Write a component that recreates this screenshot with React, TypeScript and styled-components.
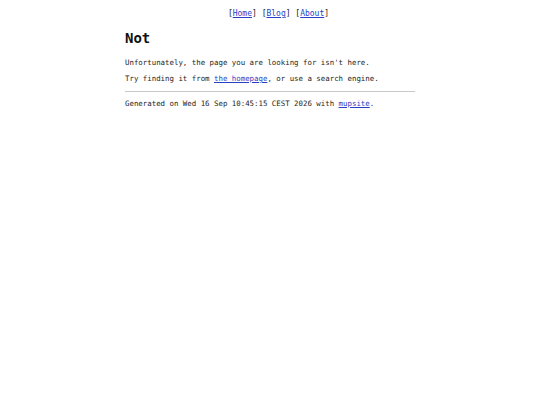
import React from "react";
import styled, { createGlobalStyle } from "styled-components";

const Global = createGlobalStyle`
  html, body { margin: 0; padding: 0; background: #fff; }
  body { font-family: "DejaVu Sans Mono", "Liberation Mono", monospace; color: #1c1c1c; }
`;

const Nav = styled.nav`
  margin-top: 9px;
  height: 10px;
  line-height: 10px;
  font-size: 8px;
  text-align: center;
  padding-left: 17px;
  color: #222;
`;

const Main = styled.main`
  width: 290px;
  margin: 0 auto;
`;

const Title = styled.h1`
  margin: 11px 0 0;
  font-size: 14px;
  line-height: 16px;
  font-weight: bold;
  color: #111;
`;

const Para = styled.p<{ $gap: number }>`
  margin: ${(p) => p.$gap}px 0 0;
  font-size: 7.4px;
  line-height: 10px;
  color: #1e1e1e;
`;

const Rule = styled.hr`
  margin: 7px 0 0;
  border: 0;
  border-top: 1px solid #c8c8c8;
  height: 0;
`;

const Link = styled.a`
  color: #2b3fc4;
  text-decoration: underline;
`;

export default function App() {
  return (
    <>
      <Global />
      <Nav>
        [<Link href="#">Home</Link>] [<Link href="#">Blog</Link>] [<Link href="#">About</Link>]
      </Nav>
      <Main>
        <Title>Not</Title>
        <Para $gap={12}>Unfortunately, the page you are looking for isn't here.</Para>
        <Para $gap={6}>
          Try finding it from <Link href="#">the homepage</Link>, or use a search engine.
        </Para>
        <Rule />
        <Para $gap={7}>
          Generated on Wed 16 Sep 10:45:15 CEST 2026 with <Link href="#">mupsite</Link>.
        </Para>
      </Main>
    </>
  );
}
